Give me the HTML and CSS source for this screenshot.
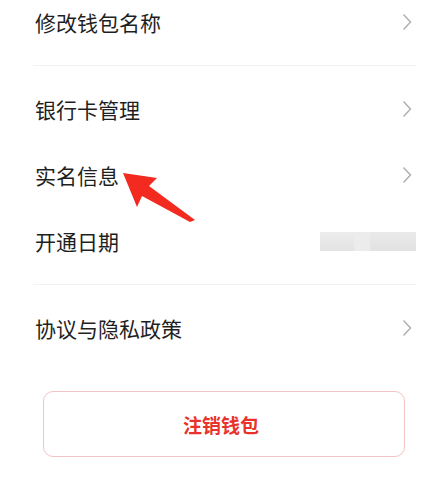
FILE: index.html
```html
<!DOCTYPE html>
<html lang="zh-CN">
<head>
<meta charset="utf-8">
<title>钱包设置</title>
<link rel="stylesheet" href="styles.css">
</head>
<body>
<div class="page">
  <div class="list">
    <div class="group group-first">
      <div class="row"><span class="label">修改钱包名称</span><svg class="chev" viewBox="0 0 10 18" width="10" height="18"><path d="M1.5 1.5 L8.5 9 L1.5 16.5" fill="none" stroke="#b0b0b0" stroke-width="1.5"/></svg></div>
    </div>
    <div class="divider"></div>
    <div class="group">
      <div class="row"><span class="label">银行卡管理</span><svg class="chev" viewBox="0 0 10 18" width="10" height="18"><path d="M1.5 1.5 L8.5 9 L1.5 16.5" fill="none" stroke="#b0b0b0" stroke-width="1.5"/></svg></div>
      <div class="row"><span class="label">实名信息</span><svg class="chev" viewBox="0 0 10 18" width="10" height="18"><path d="M1.5 1.5 L8.5 9 L1.5 16.5" fill="none" stroke="#b0b0b0" stroke-width="1.5"/></svg></div>
      <div class="row"><span class="label">开通日期</span><span class="blur"><i class="b1"></i><i class="b2"></i><i class="b3"></i></span></div>
    </div>
    <div class="divider"></div>
    <div class="group">
      <div class="row"><span class="label">协议与隐私政策</span><svg class="chev" viewBox="0 0 10 18" width="10" height="18"><path d="M1.5 1.5 L8.5 9 L1.5 16.5" fill="none" stroke="#b0b0b0" stroke-width="1.5"/></svg></div>
    </div>
  </div>
  <div class="btn-wrap">
    <div class="btn">注销钱包</div>
  </div>
  <svg class="arrow" viewBox="0 0 443 483" width="443" height="483">
    <polygon points="123,173 157,178 149,186 195,220 190,222 142,196 137,207" fill="#f22a1f"/>
  </svg>
</div>
</body>
</html>
```
FILE: styles.css
```css
html, body {
  margin: 0;
  padding: 0;
  background: #ffffff;
}
body {
  font-family: "Noto Sans CJK SC", "Noto Sans", sans-serif;
  color: #222222;
  overflow: hidden;
}
.page {
  position: relative;
  width: 443px;
  height: 483px;
  overflow: hidden;
}
.list {
  margin-top: -11px;
}
.group {
  padding: 10px 0;
}
.group-first {
  padding-top: 0;
}
.row {
  height: 66px;
  display: flex;
  align-items: center;
  justify-content: space-between;
  padding: 0 31px 0 35px;
}
.label {
  font-size: 21px;
  line-height: 1;
  color: #1f1f1f;
}
.chev {
  display: block;
}
.blur {
  display: flex;
  width: 96px;
  height: 19px;
  margin-right: -4px;
}
.blur i {
  display: block;
  height: 100%;
}
.blur .b1 { width: 34px; background: linear-gradient(180deg, #ededed, #e3e3e3); }
.blur .b2 { width: 16px; background: #ececec; }
.blur .b3 { width: 46px; background: linear-gradient(180deg, #eaeaea, #e2e2e2); }
.divider {
  height: 1px;
  background: #f2f2f2;
  margin: 0 27px 0 33px;
}
.btn-wrap {
  padding: 20px 38px 0 43px;
}
.btn {
  height: 64px;
  border: 1px solid #f4c3c3;
  border-radius: 10px;
  display: flex;
  align-items: center;
  justify-content: center;
  font-size: 19px;
  font-weight: 700;
  color: #e8332c;
  padding-right: 6px;
}
.arrow {
  position: absolute;
  left: 0;
  top: 0;
  pointer-events: none;
}
```
